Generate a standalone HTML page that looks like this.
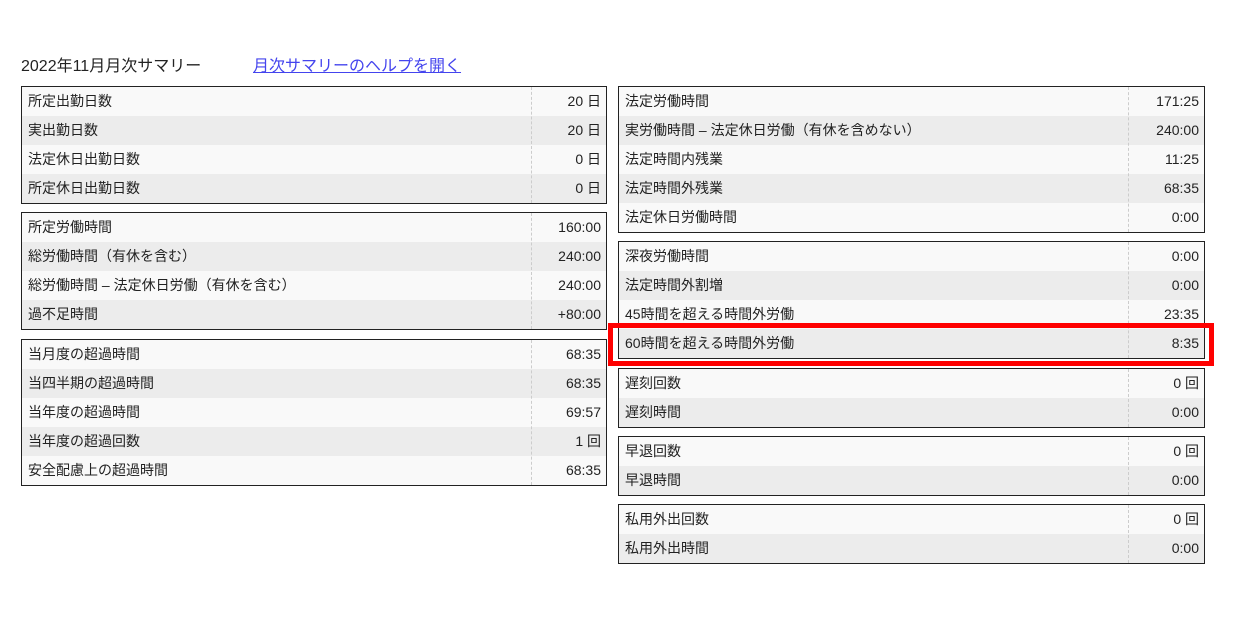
<!DOCTYPE html>
<html><head><meta charset="utf-8"><style>
body{margin:0;width:1234px;height:622px;background:#fff;font-family:"Liberation Sans","Noto Sans CJK JP",sans-serif;font-size:14px;color:#222;position:relative;overflow:hidden}
.t{position:absolute;border:1px solid #222;box-sizing:border-box;background:#f9f9f9}
.r{height:29px;line-height:29px;position:relative;padding-left:6px}
.r:nth-child(even){background:#ececec}
.r .v{position:absolute;right:5px;top:0}
.d{position:absolute;top:0;bottom:0;border-left:1px dashed #ccc}
.L{left:21px;width:586px}.R{left:618px;width:587px}
.L .d{left:509px}.R .d{left:509px}
</style></head><body>
<div style="position:absolute;left:21px;top:52px;font-size:16px">2022年11月月次サマリー</div>
<div style="position:absolute;left:253px;top:52px;font-size:16px;color:#4444ee;text-decoration:underline">月次サマリーのヘルプを開く</div>

<div class="t L" style="top:86px;height:118px"><div class="r">所定出勤日数<span class="v">20 日</span></div><div class="r">実出勤日数<span class="v">20 日</span></div><div class="r">法定休日出勤日数<span class="v">0 日</span></div><div class="r">所定休日出勤日数<span class="v">0 日</span></div><div class="d"></div></div>
<div class="t L" style="top:212px;height:118px"><div class="r">所定労働時間<span class="v">160:00</span></div><div class="r">総労働時間（有休を含む）<span class="v">240:00</span></div><div class="r">総労働時間 – 法定休日労働（有休を含む）<span class="v">240:00</span></div><div class="r">過不足時間<span class="v">+80:00</span></div><div class="d"></div></div>
<div class="t L" style="top:339px;height:147px"><div class="r">当月度の超過時間<span class="v">68:35</span></div><div class="r">当四半期の超過時間<span class="v">68:35</span></div><div class="r">当年度の超過時間<span class="v">69:57</span></div><div class="r">当年度の超過回数<span class="v">1 回</span></div><div class="r">安全配慮上の超過時間<span class="v">68:35</span></div><div class="d"></div></div>

<div class="t R" style="top:86px;height:147px"><div class="r">法定労働時間<span class="v">171:25</span></div><div class="r">実労働時間 – 法定休日労働（有休を含めない）<span class="v">240:00</span></div><div class="r">法定時間内残業<span class="v">11:25</span></div><div class="r">法定時間外残業<span class="v">68:35</span></div><div class="r">法定休日労働時間<span class="v">0:00</span></div><div class="d"></div></div>
<div class="t R" style="top:241px;height:118px"><div class="r">深夜労働時間<span class="v">0:00</span></div><div class="r">法定時間外割増<span class="v">0:00</span></div><div class="r">45時間を超える時間外労働<span class="v">23:35</span></div><div class="r">60時間を超える時間外労働<span class="v">8:35</span></div><div class="d"></div></div>
<div class="t R" style="top:368px;height:60px"><div class="r">遅刻回数<span class="v">0 回</span></div><div class="r">遅刻時間<span class="v">0:00</span></div><div class="d"></div></div>
<div class="t R" style="top:436px;height:60px"><div class="r">早退回数<span class="v">0 回</span></div><div class="r">早退時間<span class="v">0:00</span></div><div class="d"></div></div>
<div class="t R" style="top:504px;height:60px"><div class="r">私用外出回数<span class="v">0 回</span></div><div class="r">私用外出時間<span class="v">0:00</span></div><div class="d"></div></div>

<div style="position:absolute;left:608px;top:323px;width:606px;height:43px;border:5px solid #f00;box-sizing:border-box"></div>
</body></html>
